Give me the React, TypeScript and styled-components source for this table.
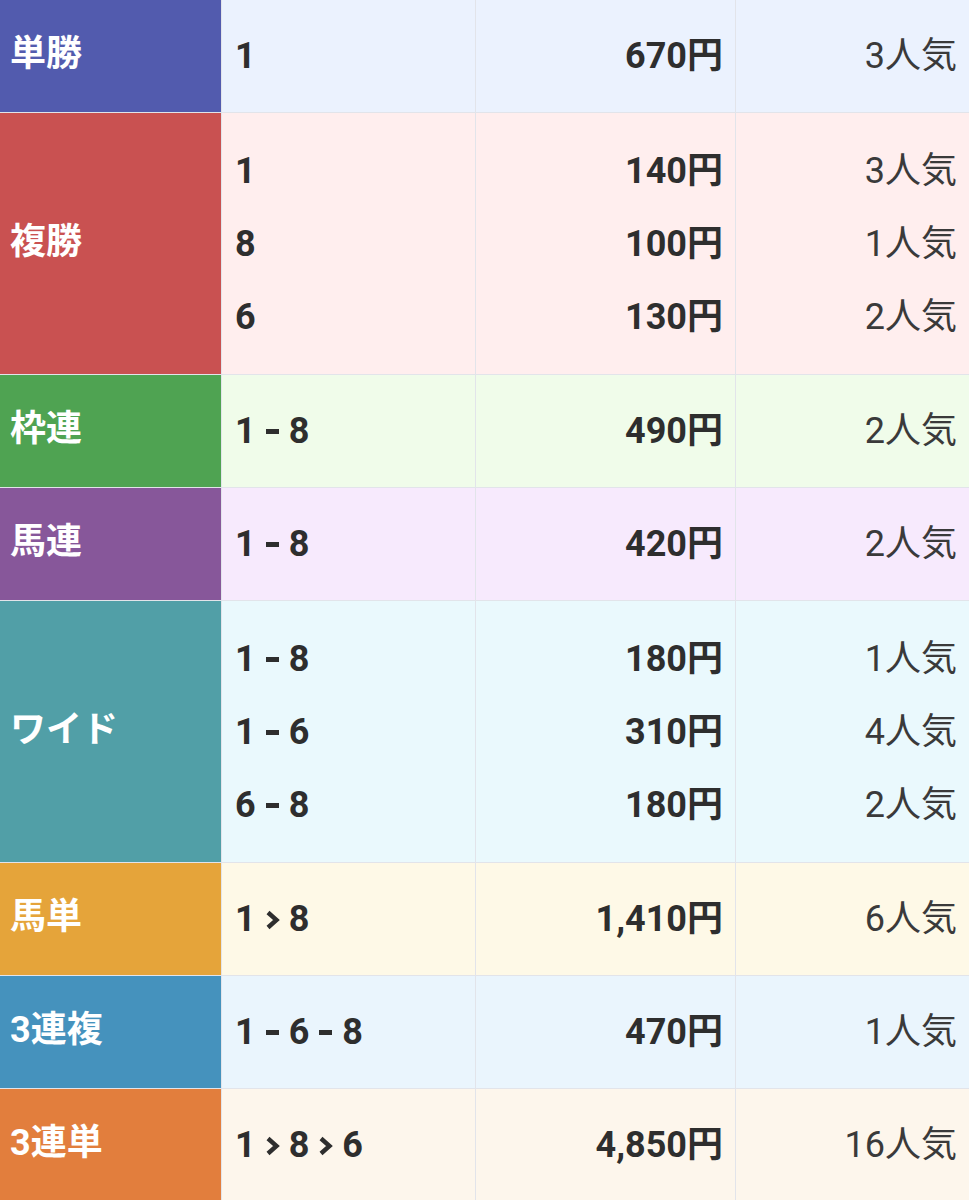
import React from 'react';
import styled, { createGlobalStyle } from 'styled-components';

const GlobalStyle = createGlobalStyle`
  html, body {
    margin: 0;
    padding: 0;
    background: #ffffff;
  }
  body {
    font-family: Roboto, "Noto Sans CJK JP", sans-serif;
    color: #333333;
  }
`;

type Line = { combo: string[]; sep: '-' | '>'; payout: string; rank: string };
type Bet = { label: string; color: string; bg: string; lines: Line[] };

const bets: Bet[] = [
  {
    label: '単勝',
    color: '#525bae',
    bg: '#ebf2fe',
    lines: [{ combo: ['1'], sep: '-', payout: '670', rank: '3' }],
  },
  {
    label: '複勝',
    color: '#c95151',
    bg: '#ffeeee',
    lines: [
      { combo: ['1'], sep: '-', payout: '140', rank: '3' },
      { combo: ['8'], sep: '-', payout: '100', rank: '1' },
      { combo: ['6'], sep: '-', payout: '130', rank: '2' },
    ],
  },
  {
    label: '枠連',
    color: '#4fa352',
    bg: '#f0fcea',
    lines: [{ combo: ['1', '8'], sep: '-', payout: '490', rank: '2' }],
  },
  {
    label: '馬連',
    color: '#87579a',
    bg: '#f7eafd',
    lines: [{ combo: ['1', '8'], sep: '-', payout: '420', rank: '2' }],
  },
  {
    label: 'ワイド',
    color: '#519fa7',
    bg: '#eaf9fd',
    lines: [
      { combo: ['1', '8'], sep: '-', payout: '180', rank: '1' },
      { combo: ['1', '6'], sep: '-', payout: '310', rank: '4' },
      { combo: ['6', '8'], sep: '-', payout: '180', rank: '2' },
    ],
  },
  {
    label: '馬単',
    color: '#e5a43a',
    bg: '#fef9e7',
    lines: [{ combo: ['1', '8'], sep: '>', payout: '1,410', rank: '6' }],
  },
  {
    label: '3連複',
    color: '#4592bd',
    bg: '#eaf5fd',
    lines: [{ combo: ['1', '6', '8'], sep: '-', payout: '470', rank: '1' }],
  },
  {
    label: '3連単',
    color: '#e27e3d',
    bg: '#fdf6ec',
    lines: [{ combo: ['1', '8', '6'], sep: '>', payout: '4,850', rank: '16' }],
  },
];

const Table = styled.div`
  width: 969px;
  display: flex;
  flex-direction: column;
`;

const Row = styled.div<{ $bg: string }>`
  display: grid;
  grid-template-columns: 221px 254px 260px 1fr;
  min-height: 112px;
  background: ${(p) => p.$bg};
  border-bottom: 1px solid #e2e4ea;
`;

const Label = styled.div<{ $color: string }>`
  background: ${(p) => p.$color};
  color: #ffffff;
  font-weight: 700;
  font-size: 36px;
  line-height: 1;
  display: flex;
  align-items: center;
  padding-left: 10px;
  padding-bottom: 4px;
`;

const Cell = styled.div<{ $align: 'left' | 'right'; $multi: boolean }>`
  border-left: 1px solid #e2e4ea;
  display: flex;
  flex-direction: column;
  justify-content: center;
  align-items: ${(p) => (p.$align === 'left' ? 'flex-start' : 'flex-end')};
  padding-top: ${(p) => (p.$multi ? '21px' : '0')};
  padding-bottom: ${(p) => (p.$multi ? '21px' : '0')};
  padding-left: ${(p) => (p.$align === 'left' ? '13px' : '0')};
  padding-right: ${(p) => (p.$align === 'right' ? '12px' : '0')};
`;

const Line = styled.div<{ $bold?: boolean }>`
  height: 73px;
  display: flex;
  align-items: center;
  font-size: 36px;
  line-height: 1;
  font-weight: ${(p) => (p.$bold ? 700 : 400)};
  color: ${(p) => (p.$bold ? '#2e2e2e' : '#3a3a3a')};
  white-space: nowrap;
`;

const Text = styled.span`
  display: block;
  line-height: 36px;
  height: 36px;
`;

const Sep = styled.span`
  display: inline-flex;
  width: 33px;
  height: 36px;
  vertical-align: top;
  align-items: center;
  justify-content: center;
  padding-top: 1px;
  box-sizing: border-box;
`;

const Dash = styled.span`
  display: block;
  width: 13px;
  height: 5px;
  background: #2e2e2e;
`;

function Chevron() {
  return (
    <svg width="15" height="20" viewBox="0 0 15 20" aria-hidden="true">
      <path d="M3 2.5 L11.5 10 L3 17.5" fill="none" stroke="#2e2e2e" strokeWidth="4.4" strokeLinejoin="miter" />
    </svg>
  );
}

function Combo({ line }: { line: Line }) {
  return (
    <Line $bold>
      <Text>
        {line.combo.map((n, i) => (
          <React.Fragment key={i}>
            {i > 0 && <Sep>{line.sep === '>' ? <Chevron /> : <Dash />}</Sep>}
            {n}
          </React.Fragment>
        ))}
      </Text>
    </Line>
  );
}

export default function App() {
  return (
    <>
      <GlobalStyle />
      <Table>
        {bets.map((bet) => {
          const multi = bet.lines.length > 1;
          return (
            <Row key={bet.label} $bg={bet.bg}>
              <Label $color={bet.color}>{bet.label}</Label>
              <Cell $align="left" $multi={multi}>
                {bet.lines.map((l, i) => (
                  <Combo key={i} line={l} />
                ))}
              </Cell>
              <Cell $align="right" $multi={multi}>
                {bet.lines.map((l, i) => (
                  <Line key={i} $bold>
                    <Text>{l.payout}円</Text>
                  </Line>
                ))}
              </Cell>
              <Cell $align="right" $multi={multi}>
                {bet.lines.map((l, i) => (
                  <Line key={i}>
                    <Text>{l.rank}人気</Text>
                  </Line>
                ))}
              </Cell>
            </Row>
          );
        })}
      </Table>
    </>
  );
}
